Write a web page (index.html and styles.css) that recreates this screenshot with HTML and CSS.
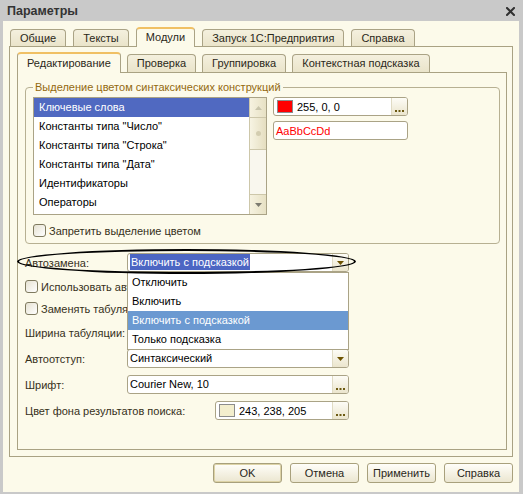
FILE: index.html
```html
<!DOCTYPE html>
<html lang="ru">
<head>
<meta charset="utf-8">
<title>Параметры</title>
<link rel="stylesheet" href="styles.css">
</head>
<body>
<div class="window">
  <div class="titlebar">
    <span class="title">Параметры</span>
    <svg class="close" width="9" height="9" viewBox="0 0 9 9"><path d="M1 1 L8 8 M8 1 L1 8" stroke="#303030" stroke-width="2" stroke-linecap="square"/></svg>
  </div>
  <div class="client">
    <div class="tabs outer-tabs">
      <div class="tab">Общие</div>
      <div class="tab">Тексты</div>
      <div class="tab active">Модули</div>
      <div class="tab">Запуск 1С:Предприятия</div>
      <div class="tab">Справка</div>
    </div>
    <div class="panel outer-panel">
      <div class="tabs inner-tabs">
        <div class="tab active">Редактирование</div>
        <div class="tab">Проверка</div>
        <div class="tab">Группировка</div>
        <div class="tab">Контекстная подсказка</div>
      </div>
      <div class="panel inner-panel">
        <fieldset class="group">
          <legend>Выделение цветом синтаксических конструкций</legend>
          <div class="group-body">
            <div class="listbox">
              <ul class="list-items">
                <li class="selected">Ключевые слова</li>
                <li>Константы типа "Число"</li>
                <li>Константы типа "Строка"</li>
                <li>Константы типа "Дата"</li>
                <li>Идентификаторы</li>
                <li>Операторы</li>
              </ul>
              <div class="scrollbar">
                <div class="sb-btn up"><svg width="7" height="4" viewBox="0 0 7 4"><path d="M3.5 0 L7 4 L0 4 Z" fill="#c8c4ab"/></svg></div>
                <div class="sb-thumb"><span class="grip"></span></div>
                <div class="sb-track"></div>
                <div class="sb-btn down"><svg width="7" height="4" viewBox="0 0 7 4"><path d="M0 0 L7 0 L3.5 4 Z" fill="#7c7a70"/></svg></div>
              </div>
            </div>
            <div class="color-col">
              <div class="field">
                <span class="swatch swatch-red"></span>
                <span class="field-text">255, 0, 0</span>
                <span class="dots-btn"><svg width="9" height="2" viewBox="0 0 9 2"><rect x="0" y="0" width="2" height="2" fill="#6d5a12"/><rect x="3.5" y="0" width="2" height="2" fill="#6d5a12"/><rect x="7" y="0" width="2" height="2" fill="#6d5a12"/></svg></span>
              </div>
              <div class="field sample">AaBbCcDd</div>
            </div>
          </div>
          <div class="check group-check"><span class="box"></span><span>Запретить выделение цветом</span></div>
        </fieldset>

        <div class="form">
          <div class="row">
            <span class="label">Автозамена:</span>
            <div class="combo wide-field">
              <span class="combo-text"><span class="hl">Включить с подсказкой</span></span>
              <span class="dd-btn"><svg width="7" height="4" viewBox="0 0 7 4"><path d="M0 0 L7 0 L3.5 4 Z" fill="#6d5200"/></svg></span>
            </div>
          </div>
          <div class="row check-row">
            <div class="check"><span class="box"></span><span class="cut">Использовать автоподстановку</span></div>
          </div>
          <div class="row check-row">
            <div class="check"><span class="box"></span><span class="cut">Заменять табуляцию пробелами</span></div>
          </div>
          <div class="row">
            <span class="label">Ширина табуляции:</span>
          </div>
          <div class="row">
            <span class="label">Автоотступ:</span>
            <div class="combo wide-field">
              <span class="combo-text">Синтаксический</span>
              <span class="dd-btn"><svg width="7" height="4" viewBox="0 0 7 4"><path d="M0 0 L7 0 L3.5 4 Z" fill="#6d5200"/></svg></span>
            </div>
          </div>
          <div class="row">
            <span class="label">Шрифт:</span>
            <div class="combo wide-field">
              <span class="combo-text">Courier New, 10</span>
              <span class="dots-btn"><svg width="9" height="2" viewBox="0 0 9 2"><rect x="0" y="0" width="2" height="2" fill="#6d5a12"/><rect x="3.5" y="0" width="2" height="2" fill="#6d5a12"/><rect x="7" y="0" width="2" height="2" fill="#6d5a12"/></svg></span>
            </div>
          </div>
          <div class="row">
            <span class="label label-wide">Цвет фона результатов поиска:</span>
            <div class="combo color-field">
              <span class="swatch swatch-cream"></span>
              <span class="field-text">243, 238, 205</span>
              <span class="dots-btn"><svg width="9" height="2" viewBox="0 0 9 2"><rect x="0" y="0" width="2" height="2" fill="#6d5a12"/><rect x="3.5" y="0" width="2" height="2" fill="#6d5a12"/><rect x="7" y="0" width="2" height="2" fill="#6d5a12"/></svg></span>
            </div>
          </div>

          <ul class="dropdown">
            <li>Отключить</li>
            <li>Включить</li>
            <li class="current">Включить с подсказкой</li>
            <li>Только подсказка</li>
          </ul>
          <div class="ellipse"></div>
        </div>
      </div>
    </div>
    <div class="buttons">
      <button class="btn btn-default">OK</button>
      <button class="btn">Отмена</button>
      <button class="btn">Применить</button>
      <button class="btn">Справка</button>
    </div>
  </div>
</div>
</body>
</html>
```

FILE: styles.css
```css
* { box-sizing: border-box; }
html, body { margin: 0; padding: 0; }
body {
  font-family: "Liberation Sans", Arial, sans-serif;
  font-size: 11px;
  color: #000;
  background: #c9c9c9;
}
.window {
  width: 523px;
  height: 494px;
  background: #c9c9c9;
  display: flex;
  flex-direction: column;
  overflow: hidden;
}
.titlebar {
  height: 21px;
  flex: none;
  display: flex;
  align-items: center;
  justify-content: space-between;
  padding: 1px 8px 0 7px;
}
.title {
  font-weight: bold;
  font-size: 12.5px;
  color: #333;
}
.close { display: block; }
.client {
  height: 471px;
  flex: none;
  margin: 0 4px 0 3px;
  background: #fcfaea;
  display: flex;
  flex-direction: column;
}

/* tabs */
.tabs { display: flex; align-items: flex-end; flex: none; }
.outer-tabs { height: 25px; padding-left: 7px; gap: 7px; }
.inner-tabs { height: 25px; gap: 6px; }
.tab {
  position: relative;
  padding: 0 9px;
  border: 1px solid #aaa385;
  border-bottom: none;
  border-radius: 4px 4px 0 0;
  background: linear-gradient(#f4f0de, #eae4ca);
  color: #2b2819;
  white-space: nowrap;
}
.outer-tabs .tab { height: 17px; line-height: 16px; }
.inner-tabs .tab { height: 18px; line-height: 17px; }
.tab.active {
  background: #fcfaea;
  border-top: 2px solid #f0c064;
  margin-bottom: -1px;
  z-index: 1;
}
.outer-tabs .tab.active { height: 20px; line-height: 17px; }
.inner-tabs .tab.active { height: 21px; line-height: 18px; }

/* panels */
.outer-panel {
  flex: none;
  height: 411px;
  margin: 0 6px;
  border: 1px solid #a9a283;
  padding: 0 5px 6px 7px;
  display: flex;
  flex-direction: column;
}
.inner-panel {
  flex: none;
  height: 378px;
  border: 1px solid #a9a283;
  display: flex;
  flex-direction: column;
}

/* group box */
.group {
  margin: 8px 6px 0 7px;
  padding: 3px 7px 6px 7px;
  border: 1px solid #b7b092;
  border-radius: 4px;
  min-width: 0;
}
.group legend {
  padding: 0 2px;
  margin-left: 0;
  color: #93690f;
  line-height: 13px;
}
.group-body {
  display: flex;
  gap: 6px;
  align-items: flex-start;
}
.listbox {
  width: 234px;
  height: 118px;
  border: 1px solid #aaa386;
  background: #fff;
  display: flex;
}
.list-items {
  flex: 1;
  margin: 0;
  padding: 0;
  list-style: none;
}
.list-items li {
  height: 19px;
  line-height: 19px;
  padding-left: 5px;
  white-space: nowrap;
}
.list-items li.selected { background: #5069c1; color: #fff; }
.scrollbar {
  width: 17px;
  flex: none;
  display: flex;
  flex-direction: column;
  border-left: 1px solid #cdc7aa;
  background: #f9f7ee;
}
.sb-btn {
  height: 20px;
  flex: none;
  display: flex;
  align-items: center;
  justify-content: center;
  background: linear-gradient(90deg, #f6f2e0, #e7e1c4);
}
.sb-btn svg { display: block; }
.sb-btn.up { border-bottom: 1px solid #cdc7aa; }
.sb-btn.down { border-top: 1px solid #cdc7aa; }
.sb-thumb {
  height: 32px;
  flex: none;
  border-bottom: 1px solid #cdc7aa;
  background: linear-gradient(90deg, #f7f4e3, #e5dec0);
  display: flex;
  align-items: center;
  justify-content: center;
}
.grip { width: 5px; height: 5px; border-radius: 50%; background: #d3cdb0; }
.sb-track { flex: 1; }

.color-col { display: flex; flex-direction: column; gap: 5px; }
.field, .combo {
  height: 19px;
  border: 1px solid #aaa386;
  border-radius: 3px;
  background: #fff;
  display: flex;
  align-items: center;
  overflow: hidden;
}
.field { width: 135px; }
.swatch {
  width: 16px;
  height: 13px;
  margin-left: 3px;
  border: 1px solid #8c8c8c;
  flex: none;
}
.swatch-red { background: #ff0000; }
.swatch-cream { background: #f3eecd; }
.field-text { flex: 1; padding-left: 4px; white-space: nowrap; }
.sample { color: #ff0000; padding-left: 2px; }
.dots-btn, .dd-btn {
  width: 16px;
  height: 100%;
  flex: none;
  border-left: 1px solid #e0dbc4;
  background: linear-gradient(#fdfcf6, #ebe5cd);
  display: flex;
  justify-content: center;
}
.dots-btn { align-items: flex-end; padding-bottom: 3px; }
.dd-btn { align-items: center; }
.dots-btn svg, .dd-btn svg { display: block; }

.check {
  display: flex;
  align-items: center;
  gap: 3px;
  height: 13px;
  color: #36301a;
  white-space: nowrap;
}
.group-check { margin-top: 9px; }
.box {
  width: 13px;
  height: 13px;
  flex: none;
  border: 1px solid #7f7a5f;
  border-radius: 3px;
  background: linear-gradient(135deg, #e6e2d2, #ffffff);
}
.cut {
  width: 86px;
  overflow: hidden;
  white-space: nowrap;
}

/* form */
.form {
  position: relative;
  margin-top: 9px;
  padding-left: 7px;
  display: flex;
  flex-direction: column;
  gap: 7px;
}
.row { display: flex; align-items: center; height: 19px; }
.row.check-row { height: 15px; }
.label { width: 102px; flex: none; color: #36301a; white-space: nowrap; }
.label-wide { width: 190px; }
.wide-field { width: 222px; }
.color-field { width: 134px; }
.combo { height: 19px; }
.combo-text { flex: 1; padding-left: 2px; white-space: nowrap; line-height: 17px; }
.hl { display: inline-block; background: #4c66c3; color: #fff; padding: 0 1px; line-height: 16px; }

.dropdown {
  position: absolute;
  left: 109px;
  top: 19px;
  width: 222px;
  height: 78px;
  margin: 0;
  padding: 0;
  list-style: none;
  background: #fff;
  border: 1px solid #aaa386;
  z-index: 2;
}
.dropdown li {
  height: 19px;
  line-height: 19px;
  padding-left: 4px;
  color: #000;
}
.dropdown li.current { background: #6b99d1; color: #fff; }
.ellipse {
  position: absolute;
  left: -1px;
  top: -4px;
  width: 339px;
  height: 25px;
  border: 2px solid #000;
  border-radius: 50%;
  z-index: 3;
}

/* buttons */
.buttons {
  display: flex;
  justify-content: flex-end;
  gap: 8px;
  padding-right: 6px;
  margin-top: 6px;
}
.btn {
  width: 69px;
  height: 20px;
  margin: 0;
  padding: 0;
  border: 1px solid #a8a07c;
  border-radius: 3px;
  background: linear-gradient(#fffef9, #ebe6d0);
  font-family: inherit;
  font-size: 11px;
  color: #2a2719;
}
.btn-default { box-shadow: inset 0 0 0 1px #ddd3a6; }
```
